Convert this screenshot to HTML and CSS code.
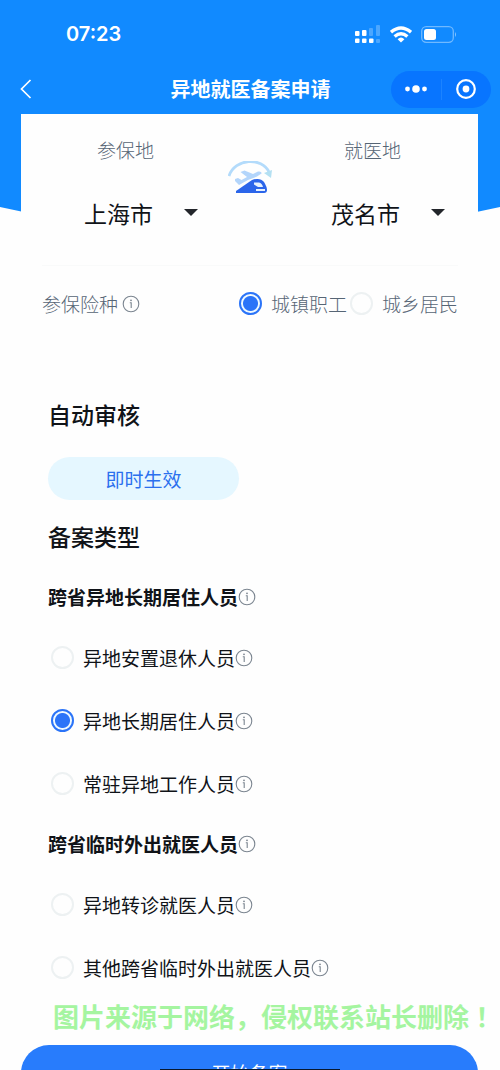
FILE: index.html
```html
<!DOCTYPE html>
<html lang="zh-CN">
<head>
<meta charset="utf-8">
<meta name="viewport" content="width=device-width, initial-scale=1">
<title>异地就医备案申请</title>
<link rel="stylesheet" href="styles.css">
</head>
<body>
<svg width="0" height="0" class="defs" aria-hidden="true">
  <symbol id="info" viewBox="0 0 18 18">
    <circle cx="9" cy="9" r="7.8" fill="none" stroke="currentColor" stroke-width="1.1"/>
    <circle cx="9" cy="5.3" r=".9" fill="currentColor"/>
    <path d="M7.8 7.8H9.2V13" fill="none" stroke="currentColor" stroke-width="1.1"/>
  </symbol>
</svg>
<div class="screen">
  <div class="backdrop"></div>
  <header class="top">
    <div class="status">
      <span class="time">07:23</span>
      <span class="indicators">
        <svg width="26" height="19" viewBox="0 0 26 19" fill="#fff" aria-hidden="true">
          <rect x="0" y="6" width="4.5" height="5" rx="1"/><rect x="7" y="5" width="4.5" height="6" rx="1"/>
          <rect x="14" y="3" width="4" height="8" rx="1" opacity=".25"/><rect x="21" y="0" width="4" height="11" rx="1" opacity=".25"/>
          <rect x="0" y="13.5" width="4.5" height="4.5" rx="1"/><rect x="7" y="13.5" width="4.5" height="4.5" rx="1"/><rect x="14" y="13.5" width="4.5" height="4.5" rx="1"/>
          <rect x="21" y="14" width="4" height="4" rx="1" opacity=".25"/>
        </svg>
        <svg width="22" height="17" viewBox="0 0 22 17" fill="none" stroke="#fff" stroke-width="3.4" aria-hidden="true">
          <path d="M1 6.2Q11-2.2 21 6.2"/><path d="M4.6 10.5Q11 5 17.4 10.5"/><path d="M7.6 13.2Q11 10 14.4 13.2L11 16.6Z" fill="#fff" stroke="none"/>
        </svg>
        <svg width="36" height="17" viewBox="0 0 36 17" aria-hidden="true">
          <rect x=".7" y=".7" width="31.6" height="15.6" rx="4.5" fill="none" stroke="#fff" stroke-opacity=".4" stroke-width="1.3"/>
          <rect x="3" y="3" width="12" height="11" rx="2.5" fill="#fff"/><path d="M34 6q2 2.5 0 5Z" fill="#fff" opacity=".5"/>
        </svg>
      </span>
    </div>
    <nav class="nav">
      <button class="back" aria-label="返回"><svg width="12" height="20" viewBox="0 0 12 20" fill="none" stroke="#fff" stroke-width="1.7"><path d="M10.5 1L1.5 10L10.5 19"/></svg></button>
      <h1 class="title">异地就医备案申请</h1>
      <div class="capsule">
        <button aria-label="更多"><svg width="24" height="10" viewBox="0 0 24 10" fill="#fff"><circle cx="3.5" cy="5" r="2.4"/><circle cx="12" cy="5" r="3.8"/><circle cx="20.5" cy="5" r="2.4"/></svg></button>
        <button aria-label="关闭"><svg width="20" height="20" viewBox="0 0 20 20"><circle cx="10" cy="10" r="8.8" fill="none" stroke="#fff" stroke-width="2.2"/><circle cx="10" cy="10" r="3.4" fill="#fff"/></svg></button>
      </div>
    </nav>
  </header>

  <main class="card">
    <section class="route">
      <div class="place">
        <label for="from">参保地</label>
        <span class="picker"><select id="from"><option>上海市</option></select></span>
      </div>
      <svg class="travel" width="44" height="34" viewBox="0 0 44 34" aria-hidden="true">
        <path d="M1 15C7-3 34-4 41 11" fill="none" stroke="#b3dbfb" stroke-width="2.8"/>
        <path d="M36 12L44 9L43 17Z" fill="#b4e0f2"/>
        <path d="M7 18L10 17L13.5 19L19 16L12.5 11L16.5 9.5L25 13L30 10.5Q34 10 33.5 12.5L29 15.5L20 19L11 24L7 20Z" fill="#b3d5fb"/>
        <path d="M8 30L24 19Q32 16 36 21Q39 26 39 29Q39 32 36 32H8Z" fill="#2b65ea"/>
        <path d="M26 21.5H31Q34 22 35 26H30L26 23.5Z" fill="#e6f1ff"/><path d="M28 28H37V30H28Z" fill="#e6f1ff"/>
      </svg>
      <div class="place">
        <label for="to">就医地</label>
        <span class="picker"><select id="to"><option>茂名市</option></select></span>
      </div>
    </section>

    <section class="insurance">
      <span class="with-info">参保险种<svg class="info"><use href="#info"/></svg></span>
      <div class="choices">
        <label class="choice"><input type="radio" name="insurance" checked>城镇职工</label>
        <label class="choice"><input type="radio" name="insurance">城乡居民</label>
      </div>
    </section>

    <section class="filing">
      <h2>自动审核</h2>
      <button class="pill">即时生效</button>
      <h2>备案类型</h2>
      <h3>跨省异地长期居住人员<svg class="info"><use href="#info"/></svg></h3>
      <label class="choice row"><input type="radio" name="type">异地安置退休人员<svg class="info"><use href="#info"/></svg></label>
      <label class="choice row"><input type="radio" name="type" checked>异地长期居住人员<svg class="info"><use href="#info"/></svg></label>
      <label class="choice row"><input type="radio" name="type">常驻异地工作人员<svg class="info"><use href="#info"/></svg></label>
      <h3>跨省临时外出就医人员<svg class="info"><use href="#info"/></svg></h3>
      <label class="choice row"><input type="radio" name="type">异地转诊就医人员<svg class="info"><use href="#info"/></svg></label>
      <label class="choice row"><input type="radio" name="type">其他跨省临时外出就医人员<svg class="info"><use href="#info"/></svg></label>
    </section>
  </main>
  <p class="notice">图片来源于网络，侵权联系站长删除<span class="mark" lang="zh-TW">！</span></p>
  <button class="submit">开始备案</button>
  <div class="home-bar"></div>
</div>
</body>
</html>
```
FILE: styles.css
```css
* { box-sizing: border-box; }

body {
  margin: 0;
  background: #fefefe;
  color: #101318;
  font-family: "Noto Sans CJK SC", sans-serif;
  font-size: 19px;
  line-height: 28px;
}

button, select {
  margin: 0;
  padding: 0;
  border: 0;
  background: none;
  color: inherit;
  font: inherit;
}

h1, h2, h3, p { margin: 0; }
svg { display: block; flex: none; }
.defs { position: absolute; }

.screen {
  position: relative;
  display: flex;
  flex-direction: column;
  height: 100vh;
  overflow: hidden;
}

.screen > * { flex: none; }

.backdrop {
  position: absolute;
  inset: 0 0 auto;
  height: 260px;
  background: #118aff;
  clip-path: polygon(0 0, 100% 0, 100% 207px, 50% 260px, 0 207px);
}

.top {
  position: relative;
  color: #fff;
}

.status {
  display: flex;
  align-items: center;
  justify-content: space-between;
  height: 64px;
  padding: 4px 43px 0 66px;
}

.time {
  font-family: Inter, sans-serif;
  font-size: 20px;
  font-weight: 600;
}

.indicators {
  display: flex;
  align-items: center;
  gap: 9px;
}

.nav {
  display: grid;
  grid-template-columns: 1fr auto 1fr;
  align-items: center;
  height: 50px;
  padding: 0 9px 0 10px;
}

.back {
  display: grid;
  place-items: center;
  width: 32px;
  height: 40px;
}

.title {
  font-size: 20px;
  font-weight: 700;
}

.capsule {
  display: flex;
  justify-self: end;
  width: 100px;
  height: 37px;
  border-radius: 20px;
  background: #0875ff;
}

.capsule button {
  display: grid;
  flex: 1;
  place-items: center;
}

.capsule button + button {
  position: relative;
}

.capsule button + button::before {
  content: "";
  position: absolute;
  left: 0;
  top: 8px;
  bottom: 8px;
  border-left: 1px solid #1c83ff;
}

.card {
  position: relative;
  margin: 0 22px 0 21px;
  background: #fefefe;
}

.route {
  display: flex;
  align-items: flex-start;
  justify-content: space-between;
  height: 151px;
  padding: 22px 33px 0 63px;
}

.place {
  display: grid;
  gap: 33px;
}

.place label {
  padding-left: 13px;
  color: #566575;
  font-weight: 300;
}

.picker {
  position: relative;
  display: block;
  width: 114px;
}

.picker select {
  appearance: none;
  display: block;
  width: 100%;
  height: 32px;
  font-size: 23px;
  line-height: 32px;
}

.picker::after {
  content: "";
  position: absolute;
  right: 0;
  top: 12px;
  border: 7px solid transparent;
  border-top-color: #23262b;
  border-bottom: 0;
  pointer-events: none;
}

.travel {
  margin: 25px 30px 0 0;
}

.insurance {
  display: flex;
  align-items: center;
  justify-content: space-between;
  height: 76px;
  margin: 0 20px 41px 21px;
  border-top: 1px solid #f9fafa;
  color: #566575;
  font-weight: 300;
}

.with-info {
  display: flex;
  align-items: center;
  gap: 4px;
}

.info {
  width: 18px;
  height: 18px;
  color: #7b8590;
}

.choices {
  display: flex;
  gap: 3px;
}

.choice {
  display: flex;
  align-items: center;
}

.choice input {
  appearance: none;
  flex: none;
  width: 23px;
  height: 23px;
  margin: 0 9px 0 0;
  border: 2px solid #edf1f2;
  border-radius: 50%;
}

.choice input:checked {
  border-color: #2b74f8;
  background: radial-gradient(circle, #2b74f8 7px, #f0faff 8px);
}

.filing {
  padding-left: 27px;
}

h2 {
  font-size: 23px;
  font-weight: 500;
  line-height: 64px;
}

h3 {
  display: flex;
  align-items: center;
  height: 58px;
  font-size: 19px;
  font-weight: 700;
}

.pill {
  display: block;
  width: 191px;
  height: 43px;
  margin: 11px 0 4px;
  border-radius: 22px;
  background: #e5f7ff;
  color: #2b70ee;
}

.row {
  height: 63px;
  padding-left: 3px;
}

.notice {
  position: relative;
  padding-left: 53px;
  color: #a5f5a0;
  font-size: 26px;
  font-weight: 700;
  line-height: 34px;
  white-space: nowrap;
}

.mark {
  font-family: "Noto Sans CJK TC", sans-serif;
}

.submit {
  height: 56px;
  margin: 12px 22px 0 21px;
  border-radius: 28px;
  background: #287cfc;
  color: #fff;
}

.home-bar {
  position: absolute;
  left: 32%;
  right: 32%;
  bottom: 0;
  height: 1px;
  background: #07182f;
}
```
